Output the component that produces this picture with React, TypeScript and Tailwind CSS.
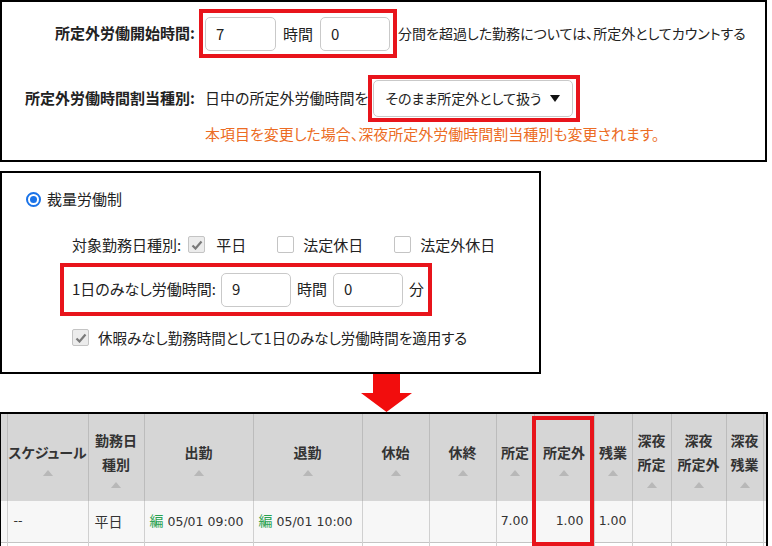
import React from 'react';

const RED = 'border-[#e8141b]';

function TextBox({ value, w }: { value: string; w: string }) {
  return (
    <div className={`${w} shrink-0 h-[34px] border border-[#c9c9c9] rounded-[5px] bg-white flex items-center pl-[10px] text-[15px] text-[#222]`}>
      {value}
    </div>
  );
}

function CheckBox({ checked }: { checked?: boolean }) {
  return (
    <div className={`w-[17px] h-[17px] shrink-0 border border-[#c4c4c4] rounded-[2px] flex items-center justify-center ${checked ? 'bg-[#ececec]' : 'bg-white'}`}>
      {checked && (
        <svg width="12" height="10" viewBox="0 0 12 10">
          <path d="M1.5 5.5 L4.5 8.5 L10.5 1.5" fill="none" stroke="#7a7a7a" strokeWidth="2.2" />
        </svg>
      )}
    </div>
  );
}

function SortArrow() {
  return (
    <svg width="10" height="6" viewBox="0 0 10 6" className="mx-auto mt-[6px]">
      <path d="M0 6 L5 0 L10 6 Z" fill="#b8b8b8" />
    </svg>
  );
}

const cols = [
  { w: 'w-[6px]', head: [] as string[] },
  { w: 'w-[81px]', head: ['スケジュール'] },
  { w: 'w-[56px]', head: ['勤務日', '種別'] },
  { w: 'w-[109px]', head: ['出勤'] },
  { w: 'w-[109px]', head: ['退勤'] },
  { w: 'w-[67px]', head: ['休始'] },
  { w: 'w-[67px]', head: ['休終'] },
  { w: 'w-[38px]', head: ['所定'] },
  { w: 'w-[60px]', head: ['所定外'] },
  { w: 'w-[38px]', head: ['残業'] },
  { w: 'w-[39px]', head: ['深夜', '所定'] },
  { w: 'w-[55px]', head: ['深夜', '所定外'] },
  { w: 'w-[37px]', head: ['深夜', '残業'] },
  { w: 'w-[5px]', head: [] as string[] },
];

export default function App() {
  return (
    <div className="w-[772px] h-[546px] bg-white overflow-hidden whitespace-nowrap font-['Noto_Sans_CJK_JP',sans-serif] [font-feature-settings:'palt'] text-[#222]">
      {/* 所定外設定 */}
      <div className="w-[767px] h-[162px] border-2 border-black">
        <div className="flex items-center mt-[7px]">
          <div className="w-[193px] shrink-0 text-right text-[15px] font-bold">所定外労働開始時間:</div>
          <div className={`ml-[4px] shrink-0 border-4 ${RED} flex items-center pt-[4px] pb-[3px] pl-[2px] pr-[3px]`}>
            <TextBox value="7" w="w-[71px]" />
            <span className="mx-[7px] text-[15px]">時間</span>
            <TextBox value="0" w="w-[70px]" />
          </div>
          <span className="ml-[1px] text-[14px]">分間を超過した勤務については、所定外としてカウントする</span>
        </div>
        <div className="flex items-center mt-[17px]">
          <div className="w-[193px] shrink-0 text-right text-[15px] font-bold">所定外労働時間割当種別:</div>
          <span className="ml-[10px] text-[15px]">日中の所定外労働時間を</span>
          <div className={`shrink-0 border-4 ${RED} p-[1px] pr-[3px]`}>
            <div className="w-[200px] h-[37px] border border-[#c9c9c9] rounded-[5px] bg-white flex items-center pl-[11px] pr-[12px] text-[14px]">
              <span className="flex-1">そのまま所定外として扱う</span>
              <svg width="10" height="7" viewBox="0 0 10 7">
                <path d="M0 0 L10 0 L5 7 Z" fill="#111" />
              </svg>
            </div>
          </div>
        </div>
        <div className="ml-[203px] mt-[1px] text-[15px] text-[#ec6c24]">
          本項目を変更した場合、深夜所定外労働時間割当種別も変更されます。
        </div>
      </div>

      {/* 裁量労働制 */}
      <div className="w-[541px] h-[203px] mt-[9px] border-2 border-black">
        <div className="flex items-center mt-[15px] ml-[24px]">
          <div className="w-[15px] h-[15px] rounded-full border-2 border-[#1a73e8] flex items-center justify-center">
            <div className="w-[7px] h-[7px] rounded-full bg-[#1a73e8]" />
          </div>
          <span className="ml-[6px] text-[15px]">裁量労働制</span>
        </div>
        <div className="flex items-center mt-[23px] ml-[70px] text-[15px]">
          <span>対象勤務日種別:</span>
          <div className="ml-[7px]"><CheckBox checked /></div>
          <span className="ml-[11px]">平日</span>
          <div className="ml-[31px]"><CheckBox /></div>
          <span className="ml-[9px]">法定休日</span>
          <div className="ml-[31px]"><CheckBox /></div>
          <span className="ml-[9px]">法定外休日</span>
        </div>
        <div className={`ml-[58px] mt-[7px] w-[372px] h-[53px] border-4 ${RED} flex items-center pl-[8px] text-[15px]`}>
          <span>1日のみなし労働時間:</span>
          <div className="ml-[5px]"><TextBox value="9" w="w-[70px]" /></div>
          <span className="mx-[6px]">時間</span>
          <TextBox value="0" w="w-[70px]" />
          <span className="ml-[6px]">分</span>
        </div>
        <div className="flex items-center mt-[11px] ml-[70px] text-[15px]">
          <CheckBox checked />
          <span className="ml-[9px] text-[14.5px]">休暇みなし勤務時間として1日のみなし労働時間を適用する</span>
        </div>
      </div>

      {/* 矢印 */}
      <div className="h-[38px] pl-[361px]">
        <svg width="51" height="38" viewBox="0 0 51 38">
          <path d="M12 0 L39 0 L39 19 L51 19 L25.5 38 L0 19 L12 19 Z" fill="#f20d0d" />
        </svg>
      </div>

      {/* 勤怠一覧 */}
      <div className="relative w-[768px] h-[136px] border-t-2 border-l border-r-2 border-black overflow-hidden">
        <table className="table-fixed border-collapse w-[767px]">
          <colgroup>
            {cols.map((c, i) => (
              <col key={i} className={c.w} />
            ))}
          </colgroup>
          <thead>
            <tr className="h-[87px] bg-[#d6d6d6]">
              {cols.map((c, i) => (
                <th key={i} className="border-r border-[#bcbcbc] p-0 text-[14px] font-bold text-[#333] leading-[24px] align-middle">
                  {c.head.length > 0 && (
                    <div className="flex flex-col items-center">
                      {c.head.map((h) => (
                        <span key={h}>{h}</span>
                      ))}
                      <SortArrow />
                    </div>
                  )}
                </th>
              ))}
            </tr>
          </thead>
          <tbody className="text-[12.5px] font-['DejaVu_Sans','Noto_Sans_CJK_JP',sans-serif] text-[#333]">
            <tr className="h-[41px] bg-[#f7f7f7] border-b border-[#c4c4c4]">
              <td className="border-r border-[#d0d0d0]" />
              <td className="border-r border-[#d0d0d0] pl-[6px]">--</td>
              <td className="border-r border-[#d0d0d0] pl-[6px] text-[14px] font-['Noto_Sans_CJK_JP',sans-serif]">平日</td>
              <td className="border-r border-[#d0d0d0] pl-[5px]">
                <span className="text-[#2aa251] text-[14px] font-['Noto_Sans_CJK_JP',sans-serif]">編</span> 05/01 09:00
              </td>
              <td className="border-r border-[#d0d0d0] pl-[5px]">
                <span className="text-[#2aa251] text-[14px] font-['Noto_Sans_CJK_JP',sans-serif]">編</span> 05/01 10:00
              </td>
              <td className="border-r border-[#d0d0d0]" />
              <td className="border-r border-[#d0d0d0]" />
              <td className="border-r border-[#d0d0d0] text-right pr-[5px]">7.00</td>
              <td className="border-r border-[#d0d0d0] text-right pr-[10px]">1.00</td>
              <td className="border-r border-[#d0d0d0] text-right pr-[5px]">1.00</td>
              <td className="border-r border-[#d0d0d0]" />
              <td className="border-r border-[#d0d0d0]" />
              <td className="border-r border-[#d0d0d0]" />
              <td />
            </tr>
            <tr className="h-[20px] bg-white">
              {cols.map((_, i) => (
                <td key={i} className="border-r border-[#d0d0d0]" />
              ))}
            </tr>
          </tbody>
        </table>
        <div className={`absolute left-[531px] top-[2px] w-[62px] h-[130px] border-4 ${RED}`} />
      </div>
    </div>
  );
}
